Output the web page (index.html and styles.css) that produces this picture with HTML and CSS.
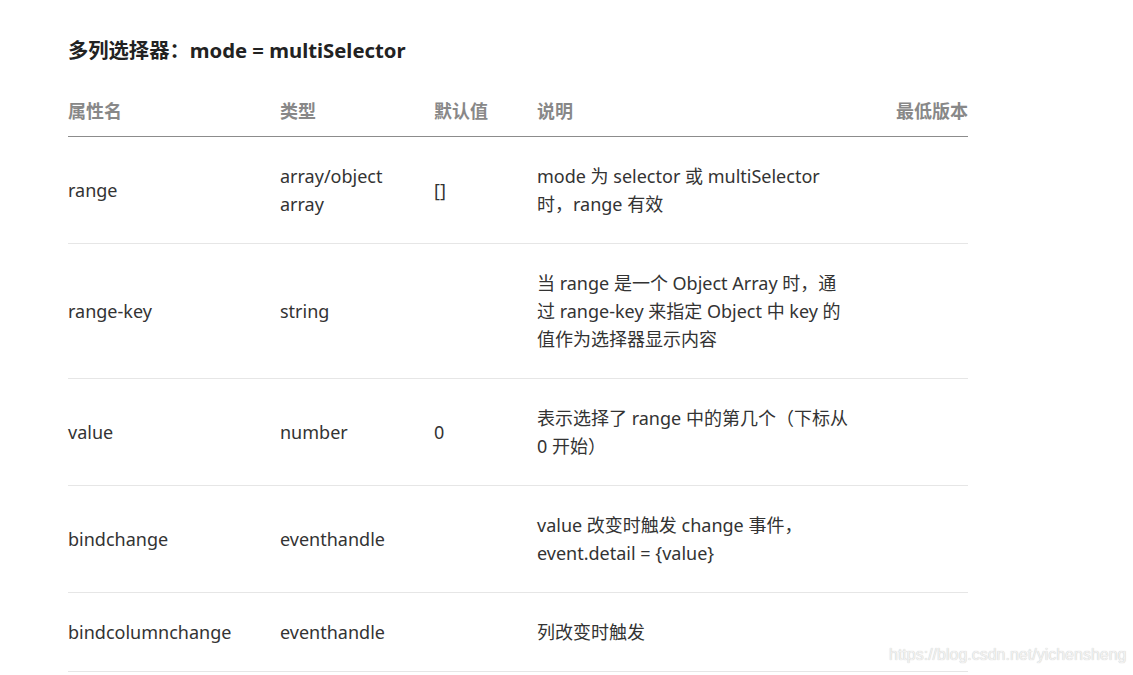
FILE: index.html
```html
<!DOCTYPE html>
<html lang="zh">
<head>
<meta charset="utf-8">
<link rel="stylesheet" href="styles.css">
</head>
<body>
<div class="page">
  <h3 class="title">多列选择器：mode = multiSelector</h3>
  <table class="props">
    <thead>
      <tr>
        <th class="c1">属性名</th>
        <th class="c2">类型</th>
        <th class="c3">默认值</th>
        <th class="c4">说明</th>
        <th class="c5">最低版本</th>
      </tr>
    </thead>
    <tbody>
      <tr>
        <td>range</td>
        <td>array/object<br>array</td>
        <td>[]</td>
        <td><div class="desc">mode 为 selector 或 multiSelector 时，range 有效</div></td>
        <td></td>
      </tr>
      <tr>
        <td>range-key</td>
        <td>string</td>
        <td></td>
        <td><div class="desc">当 range 是一个 Object Array 时，通过 range-key 来指定 Object 中 key 的值作为选择器显示内容</div></td>
        <td></td>
      </tr>
      <tr>
        <td>value</td>
        <td>number</td>
        <td>0</td>
        <td><div class="desc">表示选择了 range 中的第几个（下标从 0 开始）</div></td>
        <td></td>
      </tr>
      <tr>
        <td>bindchange</td>
        <td>eventhandle</td>
        <td></td>
        <td><div class="desc">value 改变时触发 change 事件，event.detail = {value}</div></td>
        <td></td>
      </tr>
      <tr>
        <td>bindcolumnchange</td>
        <td>eventhandle</td>
        <td></td>
        <td><div class="desc">列改变时触发</div></td>
        <td></td>
      </tr>
    </tbody>
  </table>
</div>
<div class="watermark">https://blog.csdn.net/yichensheng</div>
</body>
</html>
```

FILE: styles.css
```css
html, body {
  margin: 0;
  padding: 0;
  background: #fff;
}
body {
  font-family: "Noto Sans", "Noto Sans CJK SC", sans-serif;
  color: #333;
  width: 1133px;
  height: 675px;
  overflow: hidden;
  position: relative;
}
.page {
  padding: 36px 0 0 68px;
  width: 900px;
}
.title {
  margin: 0;
  font-size: 20.3px;
  line-height: 28px;
  font-weight: bold;
  color: #222;
}
.props {
  margin-top: 33px;
  width: 900px;
  border-collapse: collapse;
  font-size: 18px;
  line-height: 28px;
}
.props th {
  text-align: left;
  font-weight: bold;
  color: #888;
  padding: 0 0 11px 0;
  border-bottom: 1px solid #8c8c8c;
}
.props th.c5 { text-align: right; }
.c1 { width: 212px; }
.c2 { width: 154px; }
.c3 { width: 103px; }
.c4 { width: 330px; }
.props td {
  padding: 25px 0;
  border-bottom: 1px solid #e6e6e6;
  vertical-align: middle;
}
.desc {
  width: 314px;
}
.watermark {
  position: absolute;
  left: 889px;
  top: 646px;
  font-family: "Liberation Sans", Arial, sans-serif;
  font-size: 16px;
  color: #f2f2f2;
  text-shadow: 0 0 1px #bbb;
}
```
